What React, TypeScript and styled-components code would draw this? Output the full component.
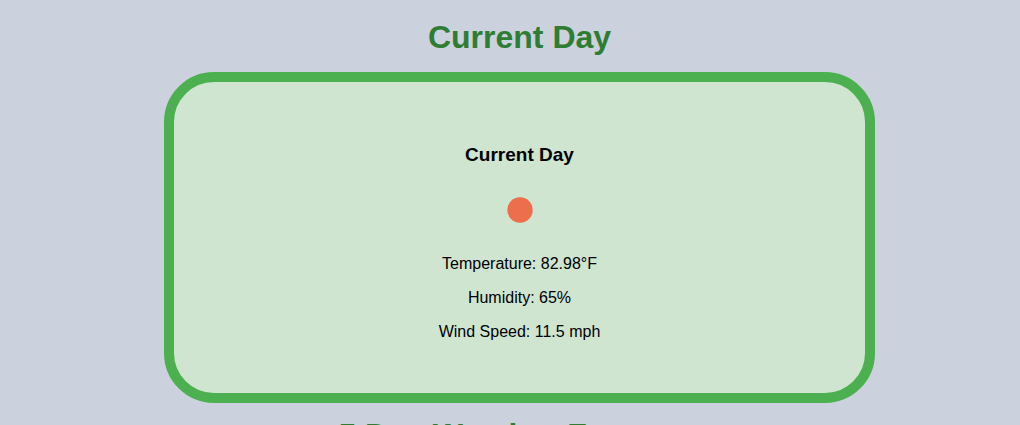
import React from "react";
import styled, { createGlobalStyle } from "styled-components";

const GlobalStyle = createGlobalStyle`
  body {
    margin: 0;
    background: #cbd1dd;
    color: #000;
    font-family: Arial, "Liberation Sans", sans-serif;
    font-size: 16px;
    line-height: 18px;
  }
`;

const Page = styled.main`
  display: flex;
  flex-direction: column;
  align-items: center;
  padding: 19px 0 0 19px;
`;

const SectionTitle = styled.h1`
  margin: 0 0 16px;
  color: #2e7d32;
  font-size: 32px;
  line-height: 37px;
  text-align: center;
`;

const WeatherCard = styled.section`
  box-sizing: border-box;
  width: 71%;
  display: flex;
  flex-direction: column;
  align-items: center;
  margin-bottom: 14px;
  padding: 62px 20px 52px;
  border: 10px solid #4caf50;
  border-radius: 50px;
  background: #cfe5d0;
  text-align: center;
`;

const DayName = styled.h3`
  margin: 0;
  font-size: 19px;
  line-height: 22px;
`;

const WeatherIcon = styled.svg`
  width: 50px;
  height: 50px;
  margin: 19px 0 20px;
`;

const Readings = styled.div`
  display: flex;
  flex-direction: column;
  gap: 16px;
`;

const Reading = styled.p`
  margin: 0;
`;

const readings = [
  "Temperature: 82.98°F",
  "Humidity: 65%",
  "Wind Speed: 11.5 mph",
];

export default function App() {
  return (
    <>
      <GlobalStyle />
      <Page>
        <SectionTitle>Current Day</SectionTitle>
        <WeatherCard>
          <DayName>Current Day</DayName>
          <WeatherIcon viewBox="0 0 50 50" role="img" aria-label="Clear sky">
            <circle cx="26" cy="25" r="12.7" fill="#ec6e4c" />
          </WeatherIcon>
          <Readings>
            {readings.map((text) => (
              <Reading key={text}>{text}</Reading>
            ))}
          </Readings>
        </WeatherCard>
        <SectionTitle>5 Day Weather Forecast</SectionTitle>
      </Page>
    </>
  );
}
